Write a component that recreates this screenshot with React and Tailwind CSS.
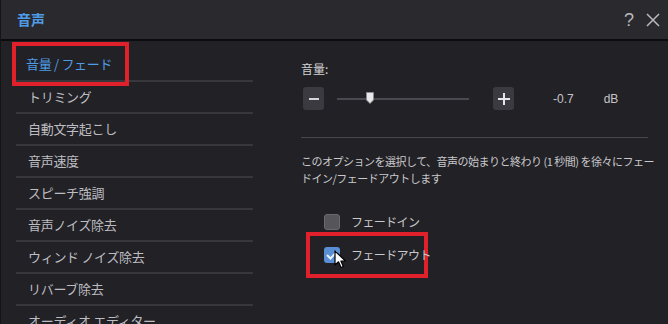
const menuItems = [
  '音量 / フェード',
  'トリミング',
  '自動文字起こし',
  '音声速度',
  'スピーチ強調',
  '音声ノイズ除去',
  'ウィンド ノイズ除去',
  'リバーブ除去',
  'オーディオ エディター'
]

const font = { fontFamily: '"Noto Sans CJK JP", "Noto Sans", sans-serif' }

const Cursor = () => (
  <svg width="14" height="20" viewBox="0 0 14 20">
    <path d="M1 1 L1 15 L4.5 11.8 L7 17.5 L9.3 16.5 L6.9 11 L11.5 11 Z" fill="#fff" stroke="#000" strokeWidth="1.2" strokeLinejoin="round" />
  </svg>
)

export default function App() {
  return (
    <div className="w-[668px] h-[324px] overflow-hidden bg-[#222126] text-[#c9c9cc] flex flex-col border-l border-[#141316]" style={font}>
      <div className="h-[41px] shrink-0 bg-[#2a292e] border-b-2 border-[#0c0c0e] flex items-center pl-4 pr-2">
        <span className="text-[14px] font-bold text-[#4f9ce6]">音声</span>
        <div className="ml-auto flex items-center gap-3 text-[#b9b9bd]">
          <span className="text-[18px] leading-none" style={{ fontFamily: '"Liberation Sans", sans-serif' }}>?</span>
          <svg width="14" height="14" viewBox="0 0 14 14">
            <path d="M1 1 L13 13 M13 1 L1 13" stroke="#b9b9bd" strokeWidth="1.5" />
          </svg>
        </div>
      </div>

      <div className="flex flex-1 min-h-0">
        <div className="w-[268px] shrink-0 pl-[15px] pt-[9px]">
          {menuItems.map((item, index) => (
            <div key={index} className="w-[237px] h-[32px] border-b-2 border-[#38373c] flex items-center">
              {index === 0 ? (
                <div className="-ml-[4px] w-[117px] h-[44px] mt-[-2px] border-[4px] border-[#e0202a] flex items-center pl-[10px]">
                  <span className="text-[13px] text-[#4f9ce6] tracking-[-0.3px]">{item}</span>
                </div>
              ) : (
                <span className="pl-[12px] text-[13px] text-[#bdbdc1] tracking-[-0.3px]">{item}</span>
              )}
            </div>
          ))}
        </div>

        <div className="flex-1 pl-[32px] pr-[20px] pt-[22px]">
          <div className="text-[12px] text-[#d2d2d5] leading-none">音量:</div>
          <div className="flex items-center mt-[12px] ml-[2px] h-[23px]">
            <button className="w-[21px] h-[23px] rounded-[3px] bg-[#3b3a40] flex items-center justify-center">
              <span className="w-[10px] h-[2px] bg-[#d5d5d8]" />
            </button>
            <div className="relative ml-[13px] w-[132px] h-[2px] bg-[#4a494f]">
              <svg className="absolute left-[29px] -top-[6px]" width="8" height="12" viewBox="0 0 8 12">
                <path d="M0.5 0.5 H7.5 V8 L4 11.5 L0.5 8 Z" fill="#e8e8ea" stroke="#8a8a8e" strokeWidth="1" />
              </svg>
            </div>
            <button className="ml-[24px] w-[21px] h-[23px] rounded-[3px] bg-[#3b3a40] flex items-center justify-center">
              <svg width="12" height="12" viewBox="0 0 12 12">
                <path d="M6 0 V12 M0 6 H12" stroke="#e6e6e8" strokeWidth="2" />
              </svg>
            </button>
            <span className="ml-[39px] text-[12px] text-[#c5c5c8]" style={{ fontFamily: '"Liberation Sans", sans-serif' }}>-0.7</span>
            <span className="ml-[30px] text-[12px] text-[#c5c5c8]" style={{ fontFamily: '"Liberation Sans", sans-serif' }}>dB</span>
          </div>
          <div className="mt-[27px] h-px w-[347px] bg-[#48474c]" />

          <p className="mt-[15px] text-[11px] leading-[17px] text-[#c9c9cc] whitespace-nowrap tracking-[-0.5px]">
            このオプションを選択して、音声の始まりと終わり (1 秒間) を徐々にフェー
            <br />
            ドイン/フェードアウトします
          </p>

          <div className="mt-[26px] ml-[23px] flex items-center h-[18px]">
            <span className="w-[16px] h-[16px] rounded-[3px] bg-[#56555a] border border-[#6a696e]" />
            <span className="ml-[11px] text-[12px] text-[#c9c9cc] tracking-[-0.6px]">フェードイン</span>
          </div>

          <div className="mt-[1px] ml-[5px] w-[122px] h-[46px] border-[4px] border-[#e0202a] flex items-center pl-[14px] relative whitespace-nowrap">
            <span className="shrink-0 w-[16px] h-[16px] rounded-[3px] bg-[#5a8fd6] flex items-center justify-center">
              <svg width="12" height="10" viewBox="0 0 12 10">
                <path d="M1 5 L4.5 8.5 L11 1.5" stroke="#e8f0fb" strokeWidth="2" fill="none" />
              </svg>
            </span>
            <span className="ml-[11px] text-[12px] text-[#c9c9cc] tracking-[-0.6px]">フェードアウト</span>
            <div className="absolute left-[24px] top-[14px]">
              <Cursor />
            </div>
          </div>
        </div>
      </div>
    </div>
  )
}
